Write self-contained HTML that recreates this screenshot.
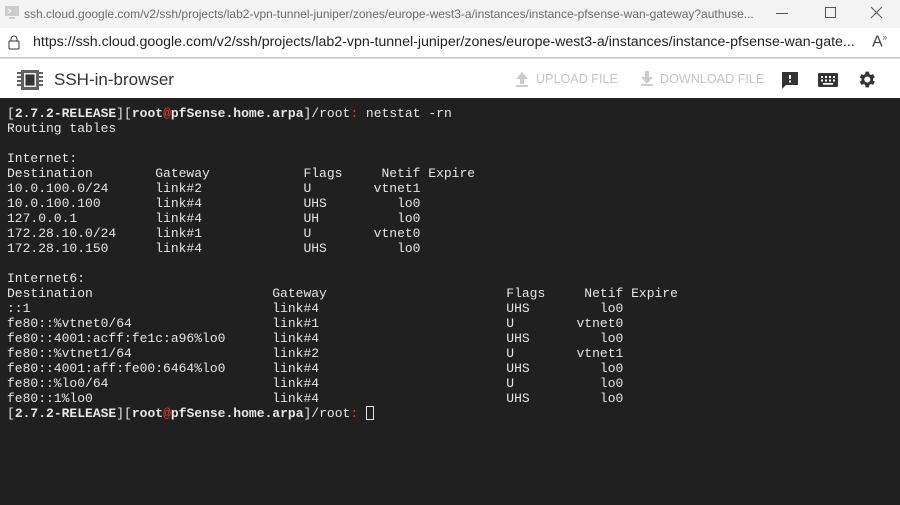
<!DOCTYPE html>
<html><head><meta charset="utf-8"><style>
*{margin:0;padding:0;box-sizing:border-box}
body{width:900px;height:505px;overflow:hidden;background:#202020;font-family:"Liberation Sans",sans-serif}
.tb{position:absolute;left:0;top:0;width:900px;height:28px;background:#f3f3f3;color:#6b6b6b;font-size:12px}
.ab{position:absolute;left:0;top:28px;width:900px;height:30px;background:#fff;border-bottom:1px solid #c8c8c8;font-size:14.2px;color:#222}
.hd{position:absolute;left:0;top:58px;width:900px;height:40px;background:#fff;border-top:1px solid #dedede}
.term{position:absolute;left:7px;top:106px;font-family:"Liberation Mono",monospace;font-size:13px;line-height:15px;color:#e6e6e6;white-space:pre}
b{font-weight:bold}
.r{color:#e0392b}
</style></head><body>
<div class="tb">
 <svg style="position:absolute;left:4px;top:5px" width="16" height="16" viewBox="0 0 16 16"><rect x="1" y="1" width="14" height="10" fill="#ccc"/><path d="M4 4l3 2-3 2" stroke="#fff" fill="none"/><rect x="5" y="12" width="6" height="2" fill="#ccc"/></svg>
 <span style="position:absolute;left:24px;top:7px">ssh.cloud.google.com/v2/ssh/projects/lab2-vpn-tunnel-juniper/zones/europe-west3-a/instances/instance-pfsense-wan-gateway?authuse...</span>
 <div style="position:absolute;left:776px;top:13px;width:12px;height:1px;background:#555"></div>
 <div style="position:absolute;left:825px;top:7px;width:11px;height:11px;border:1px solid #555"></div>
 <svg style="position:absolute;left:870px;top:6px" width="13" height="13"><path d="M1 1L12 12M12 1L1 12" stroke="#555"/></svg>
</div>
<div class="ab">
 <svg style="position:absolute;left:8px;top:7px" width="12" height="15" viewBox="0 0 12 15"><rect x="1" y="6" width="10" height="8" rx="1" fill="none" stroke="#333"/><path d="M3 6V4a3 3 0 0 1 6 0v2" fill="none" stroke="#333"/></svg>
 <span style="position:absolute;left:33px;top:6px">https://ssh.cloud.google.com/v2/ssh/projects/lab2-vpn-tunnel-juniper/zones/europe-west3-a/instances/instance-pfsense-wan-gate...</span>
 <span style="position:absolute;left:872px;top:5px;font-size:16px;color:#444">A<sup style="font-size:8px">»</sup></span>
</div>
<div class="hd">
 <svg style="position:absolute;left:16px;top:8px" width="28" height="26" viewBox="0 0 28 26"><rect x="5" y="3" width="18" height="20" fill="#616161"/><rect x="8" y="6" width="12" height="14" fill="#eee"/><rect x="9.5" y="7.5" width="9" height="11" fill="#333"/><g stroke="#616161" stroke-width="2"><path d="M1 6h4M1 10h4M1 14h4M1 18h4M23 6h4M23 10h4M23 14h4M23 18h4"/></g></svg>
 <span style="position:absolute;left:54px;top:11px;font-size:17px;color:#333">SSH-in-browser</span>
 <svg style="position:absolute;left:515px;top:12px" width="14" height="16" viewBox="0 0 14 16"><path d="M7 1L1 8h4v5h4V8h4z" fill="#ccc"/><rect x="1" y="14" width="12" height="2" fill="#ccc"/></svg>
 <span style="position:absolute;left:536px;top:13px;font-size:12.6px;color:#c4c4c4">UPLOAD FILE</span>
 <svg style="position:absolute;left:640px;top:11px" width="14" height="16" viewBox="0 0 14 16"><path d="M5 1h4v6h4l-6 7-6-7h4z" fill="#ccc"/><rect x="1" y="14" width="12" height="2" fill="#ccc"/></svg>
 <span style="position:absolute;left:660px;top:13px;font-size:12.6px;color:#c4c4c4">DOWNLOAD FILE</span>
 <svg style="position:absolute;left:781px;top:12px" width="18" height="18" viewBox="0 0 18 18"><path d="M1 1h16v13H5l-4 4z" fill="#333"/><rect x="8" y="4" width="2" height="4" fill="#fff"/><rect x="8" y="9.5" width="2" height="2" fill="#fff"/></svg>
 <svg style="position:absolute;left:818px;top:14px" width="20" height="14" viewBox="0 0 20 14"><rect width="20" height="14" rx="1.5" fill="#333"/><g fill="#fff"><rect x="3" y="3" width="2" height="2"/><rect x="7" y="3" width="2" height="2"/><rect x="11" y="3" width="2" height="2"/><rect x="15" y="3" width="2" height="2"/><rect x="3" y="6.5" width="2" height="2"/><rect x="7" y="6.5" width="2" height="2"/><rect x="11" y="6.5" width="2" height="2"/><rect x="15" y="6.5" width="2" height="2"/><rect x="5" y="10" width="10" height="1.7"/></g></svg>
 <svg style="position:absolute;left:856px;top:10px" width="21" height="21" viewBox="0 0 24 24"><path fill="#333" d="M19.4 13a7.5 7.5 0 0 0 0-2l2.1-1.6-2-3.5-2.5 1a7 7 0 0 0-1.7-1L14.9 3h-4l-.4 2.9a7 7 0 0 0-1.7 1l-2.5-1-2 3.5L6.4 11a7.5 7.5 0 0 0 0 2l-2.1 1.6 2 3.5 2.5-1a7 7 0 0 0 1.7 1l.4 2.9h4l.4-2.9a7 7 0 0 0 1.7-1l2.5 1 2-3.5zM12.9 15.5a3.5 3.5 0 1 1 0-7 3.5 3.5 0 0 1 0 7z"/></svg>
</div>
<div class="term">[<b>2.7.2-RELEASE</b>][<b>root</b><b class="r">@</b><b>pfSense.home.arpa</b>]/root<span class="r">:</span> netstat -rn
Routing tables

Internet:
Destination        Gateway            Flags     Netif Expire
10.0.100.0/24      link#2             U        vtnet1
10.0.100.100       link#4             UHS         lo0
127.0.0.1          link#4             UH          lo0
172.28.10.0/24     link#1             U        vtnet0
172.28.10.150      link#4             UHS         lo0

Internet6:
Destination                       Gateway                       Flags     Netif Expire
::1                               link#4                        UHS         lo0
fe80::%vtnet0/64                  link#1                        U        vtnet0
fe80::4001:acff:fe1c:a96%lo0      link#4                        UHS         lo0
fe80::%vtnet1/64                  link#2                        U        vtnet1
fe80::4001:aff:fe00:6464%lo0      link#4                        UHS         lo0
fe80::%lo0/64                     link#4                        U           lo0
fe80::1%lo0                       link#4                        UHS         lo0
[<b>2.7.2-RELEASE</b>][<b>root</b><b class="r">@</b><b>pfSense.home.arpa</b>]/root<span class="r">:</span> <span style="display:inline-block;width:8px;height:14px;border:1px solid #e6e6e6;vertical-align:-3px"></span></div>
</body></html>
